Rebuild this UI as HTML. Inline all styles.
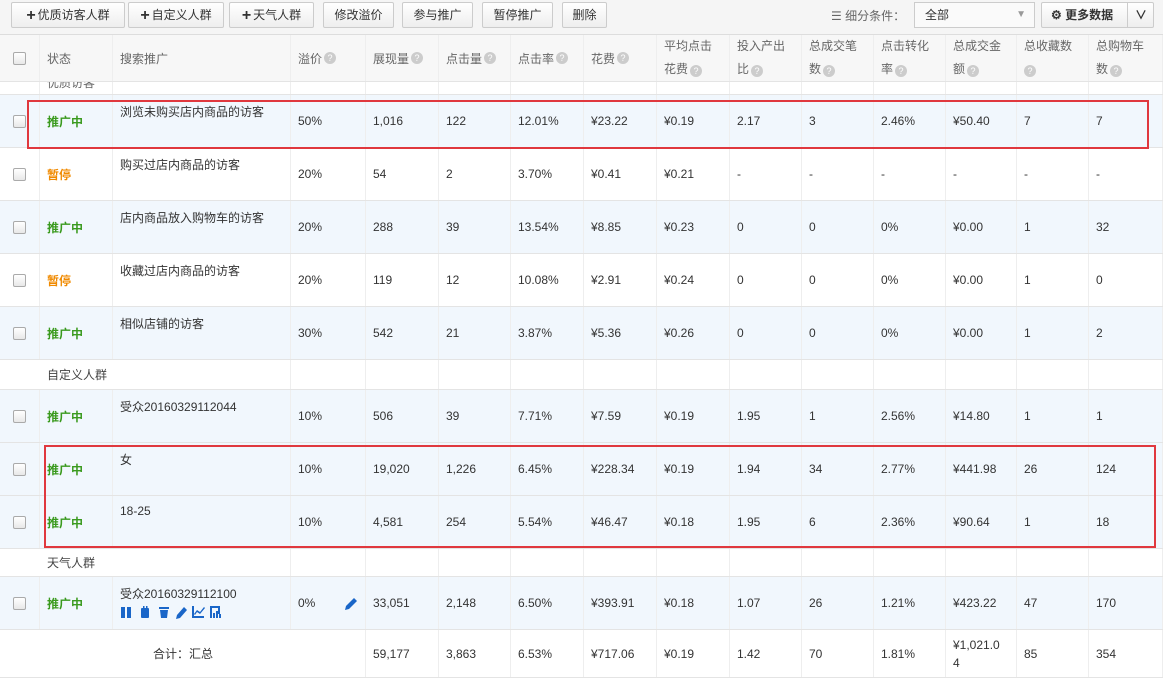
<!DOCTYPE html>
<html><head><meta charset="utf-8"><style>
*{box-sizing:border-box;margin:0;padding:0}
body{width:1163px;height:678px;overflow:hidden;background:#fff;font-family:"Liberation Sans","Noto Sans CJK SC",sans-serif;font-size:12px;color:#333;position:relative}
.tb{position:absolute;top:0;left:0;width:1163px;height:35px;background:#f5f5f5;border-bottom:1px solid #ddd}
.btn{position:absolute;top:2px;height:26px;border:1px solid #ccc;border-radius:2px;background:linear-gradient(#fff,#eee);line-height:24px;text-align:center;font-size:12px;color:#333}
.btn b{font-size:16px;font-weight:bold;vertical-align:-1px;margin-right:2px}
.row{position:absolute;left:0;width:1163px;border-bottom:1px solid #e4e4e4;display:flex}
.row>div{flex:none;border-right:1px solid #eee;padding-left:7px;position:relative;height:100%;display:flex;align-items:center}
.c0{width:40px}.c1{width:73px}.c2{width:178px}.c3{width:75px}.c4{width:73px}.c5{width:72px}.c6{width:73px}.c7{width:73px}.c8{width:73px}.c9{width:72px}.c10{width:72px}.c11{width:72px}.c12{width:71px}.c13{width:72px}.c14{width:74px}
.hd{top:35px;height:47px;background:#f7f7f7;color:#666}
.hd>div>span.t{display:block;line-height:23px}
.q{display:inline-block;width:12px;height:12px;border-radius:50%;background:#ccc;color:#fff;font-size:9px;line-height:12px;text-align:center;vertical-align:-1px;margin-left:2px}
.cb{width:13px;height:13px;border:1px solid #aaa;border-radius:2px;background:linear-gradient(#fff,#e8e8e8);margin-left:6px}
.on{color:#3a9a1e;font-weight:bold}.off{color:#f08a00;font-weight:bold}
.nm{position:absolute;top:8px;left:7px}
.blue{background:#f1f7fd}
.grp{color:#444}
.red{position:absolute;border:2px solid #e0383e}
</style></head><body>
<div class="tb">
<div class="btn" style="left:11px;width:114px"><b>+</b>优质访客人群</div>
<div class="btn" style="left:128px;width:96px"><b>+</b>自定义人群</div>
<div class="btn" style="left:229px;width:85px"><b>+</b>天气人群</div>
<div class="btn" style="left:323px;width:71px">修改溢价</div>
<div class="btn" style="left:402px;width:71px">参与推广</div>
<div class="btn" style="left:482px;width:71px">暂停推广</div>
<div class="btn" style="left:562px;width:45px">删除</div>
<div style="position:absolute;left:831px;top:7px;color:#666">☰ 细分条件：</div>
<div style="position:absolute;left:914px;top:2px;width:121px;height:26px;border:1px solid #ccc;background:#fafafa;line-height:24px;padding-left:10px">全部<span style="position:absolute;right:8px;color:#999;font-size:10px">▼</span></div>
<div class="btn" style="left:1041px;width:113px;text-align:left;padding-left:9px;font-weight:bold">⚙ 更多数据<span style="position:absolute;left:85px;top:0;width:27px;height:24px;border-left:1px solid #ccc;text-align:center">∨</span></div>
</div>
<div class="row hd">
<div class="c0"><span class="cb"></span></div><div class="c1">状态</div><div class="c2">搜索推广</div><div class="c3">溢价<span class="q">?</span></div><div class="c4">展现量<span class="q">?</span></div><div class="c5">点击量<span class="q">?</span></div><div class="c6">点击率<span class="q">?</span></div><div class="c7">花费<span class="q">?</span></div>
<div class="c8"><span class="t">平均点击<br>花费<span class="q">?</span></span></div><div class="c9"><span class="t">投入产出<br>比<span class="q">?</span></span></div><div class="c10"><span class="t">总成交笔<br>数<span class="q">?</span></span></div><div class="c11"><span class="t">点击转化<br>率<span class="q">?</span></span></div><div class="c12"><span class="t">总成交金<br>额<span class="q">?</span></span></div><div class="c13"><span class="t">总收藏数<br><span class="q" style="margin:0">?</span></span></div><div class="c14"><span class="t">总购物车<br>数<span class="q">?</span></span></div>
</div>
<div class="row" style="top:82px;height:13px"><div class="c0"></div><div class="c1" style="overflow:hidden;align-items:flex-start"><span style="margin-top:-8px;color:#666">优质访客</span></div><div class="c2"></div><div class="c3"></div><div class="c4"></div><div class="c5"></div><div class="c6"></div><div class="c7"></div><div class="c8"></div><div class="c9"></div><div class="c10"></div><div class="c11"></div><div class="c12"></div><div class="c13"></div><div class="c14"></div></div>

<div class="row blue" style="top:95px;height:53px"><div class="c0"><span class="cb"></span></div><div class="c1 on">推广中</div><div class="c2"><span class="nm">浏览未购买店内商品的访客</span></div><div class="c3">50%</div><div class="c4">1,016</div><div class="c5">122</div><div class="c6">12.01%</div><div class="c7">¥23.22</div><div class="c8">¥0.19</div><div class="c9">2.17</div><div class="c10">3</div><div class="c11">2.46%</div><div class="c12">¥50.40</div><div class="c13">7</div><div class="c14">7</div></div>
<div class="row" style="top:148px;height:53px"><div class="c0"><span class="cb"></span></div><div class="c1 off">暂停</div><div class="c2"><span class="nm">购买过店内商品的访客</span></div><div class="c3">20%</div><div class="c4">54</div><div class="c5">2</div><div class="c6">3.70%</div><div class="c7">¥0.41</div><div class="c8">¥0.21</div><div class="c9">-</div><div class="c10">-</div><div class="c11">-</div><div class="c12">-</div><div class="c13">-</div><div class="c14">-</div></div>
<div class="row blue" style="top:201px;height:53px"><div class="c0"><span class="cb"></span></div><div class="c1 on">推广中</div><div class="c2"><span class="nm">店内商品放入购物车的访客</span></div><div class="c3">20%</div><div class="c4">288</div><div class="c5">39</div><div class="c6">13.54%</div><div class="c7">¥8.85</div><div class="c8">¥0.23</div><div class="c9">0</div><div class="c10">0</div><div class="c11">0%</div><div class="c12">¥0.00</div><div class="c13">1</div><div class="c14">32</div></div>
<div class="row" style="top:254px;height:53px"><div class="c0"><span class="cb"></span></div><div class="c1 off">暂停</div><div class="c2"><span class="nm">收藏过店内商品的访客</span></div><div class="c3">20%</div><div class="c4">119</div><div class="c5">12</div><div class="c6">10.08%</div><div class="c7">¥2.91</div><div class="c8">¥0.24</div><div class="c9">0</div><div class="c10">0</div><div class="c11">0%</div><div class="c12">¥0.00</div><div class="c13">1</div><div class="c14">0</div></div>
<div class="row blue" style="top:307px;height:53px"><div class="c0"><span class="cb"></span></div><div class="c1 on">推广中</div><div class="c2"><span class="nm">相似店铺的访客</span></div><div class="c3">30%</div><div class="c4">542</div><div class="c5">21</div><div class="c6">3.87%</div><div class="c7">¥5.36</div><div class="c8">¥0.26</div><div class="c9">0</div><div class="c10">0</div><div class="c11">0%</div><div class="c12">¥0.00</div><div class="c13">1</div><div class="c14">2</div></div>
<div class="row" style="top:360px;height:30px"><div class="c0" style="border:0"></div><div class="c1 grp" style="width:251px">自定义人群</div><div class="c3"></div><div class="c4"></div><div class="c5"></div><div class="c6"></div><div class="c7"></div><div class="c8"></div><div class="c9"></div><div class="c10"></div><div class="c11"></div><div class="c12"></div><div class="c13"></div><div class="c14"></div></div>
<div class="row blue" style="top:390px;height:53px"><div class="c0"><span class="cb"></span></div><div class="c1 on">推广中</div><div class="c2"><span class="nm">受众20160329112044</span></div><div class="c3">10%</div><div class="c4">506</div><div class="c5">39</div><div class="c6">7.71%</div><div class="c7">¥7.59</div><div class="c8">¥0.19</div><div class="c9">1.95</div><div class="c10">1</div><div class="c11">2.56%</div><div class="c12">¥14.80</div><div class="c13">1</div><div class="c14">1</div></div>
<div class="row blue" style="top:443px;height:53px"><div class="c0"><span class="cb"></span></div><div class="c1 on">推广中</div><div class="c2"><span class="nm">女</span></div><div class="c3">10%</div><div class="c4">19,020</div><div class="c5">1,226</div><div class="c6">6.45%</div><div class="c7">¥228.34</div><div class="c8">¥0.19</div><div class="c9">1.94</div><div class="c10">34</div><div class="c11">2.77%</div><div class="c12">¥441.98</div><div class="c13">26</div><div class="c14">124</div></div>
<div class="row blue" style="top:496px;height:53px"><div class="c0"><span class="cb"></span></div><div class="c1 on">推广中</div><div class="c2"><span class="nm">18-25</span></div><div class="c3">10%</div><div class="c4">4,581</div><div class="c5">254</div><div class="c6">5.54%</div><div class="c7">¥46.47</div><div class="c8">¥0.18</div><div class="c9">1.95</div><div class="c10">6</div><div class="c11">2.36%</div><div class="c12">¥90.64</div><div class="c13">1</div><div class="c14">18</div></div>
<div class="row" style="top:549px;height:28px"><div class="c0" style="border:0"></div><div class="c1 grp" style="width:251px">天气人群</div><div class="c3"></div><div class="c4"></div><div class="c5"></div><div class="c6"></div><div class="c7"></div><div class="c8"></div><div class="c9"></div><div class="c10"></div><div class="c11"></div><div class="c12"></div><div class="c13"></div><div class="c14"></div></div>
<div class="row blue" style="top:577px;height:53px"><div class="c0"><span class="cb"></span></div><div class="c1 on">推广中</div><div class="c2"><span class="nm">受众20160329112100</span>
<svg style="position:absolute;left:7px;top:28px" width="110" height="14" viewBox="0 0 110 14" fill="#1a66c8">
<rect x="1" y="2" width="4" height="11"/><rect x="7" y="2" width="4" height="11"/>
<rect x="21" y="3" width="8" height="10" rx="1"/><rect x="23" y="1" width="1.5" height="3"/><rect x="26" y="1" width="1.5" height="3"/>
<rect x="39" y="2" width="10" height="2"/><path d="M40 5h8l-1 8h-6z"/>
<path d="M57 10l7-8 3 3-7 8-4 1z"/>
<path d="M72 1v12h12v-2h-10v-10z M74 9l3-4 3 2 4-5 1 1-5 6-3-2-2 3z"/>
<path d="M90 1h10v8h-2v-6h-6v10h-2z M93 8h2v5h-2z M96 6h2v7h-2z M99 9h2v4h-2z"/>
</svg></div><div class="c3">0%<svg style="position:absolute;right:6px" width="14" height="14" viewBox="0 0 14 14" fill="#1a66c8"><path d="M1 10l8-8 3 3-8 8-4 1z"/></svg></div><div class="c4">33,051</div><div class="c5">2,148</div><div class="c6">6.50%</div><div class="c7">¥393.91</div><div class="c8">¥0.18</div><div class="c9">1.07</div><div class="c10">26</div><div class="c11">1.21%</div><div class="c12">¥423.22</div><div class="c13">47</div><div class="c14">170</div></div>
<div class="row" style="top:630px;height:48px"><div class="c0" style="border:0"></div><div class="c1" style="border:0"></div><div class="c2" style="width:253px;padding-left:40px">合计：汇总</div><div class="c4">59,177</div><div class="c5">3,863</div><div class="c6">6.53%</div><div class="c7">¥717.06</div><div class="c8">¥0.19</div><div class="c9">1.42</div><div class="c10">70</div><div class="c11">1.81%</div><div class="c12" style="line-height:18px">¥1,021.0<br>4</div><div class="c13">85</div><div class="c14">354</div></div>

<div class="red" style="left:27px;top:100px;width:1122px;height:49px"></div>
<div class="red" style="left:44px;top:445px;width:1112px;height:103px"></div>
</body></html>
